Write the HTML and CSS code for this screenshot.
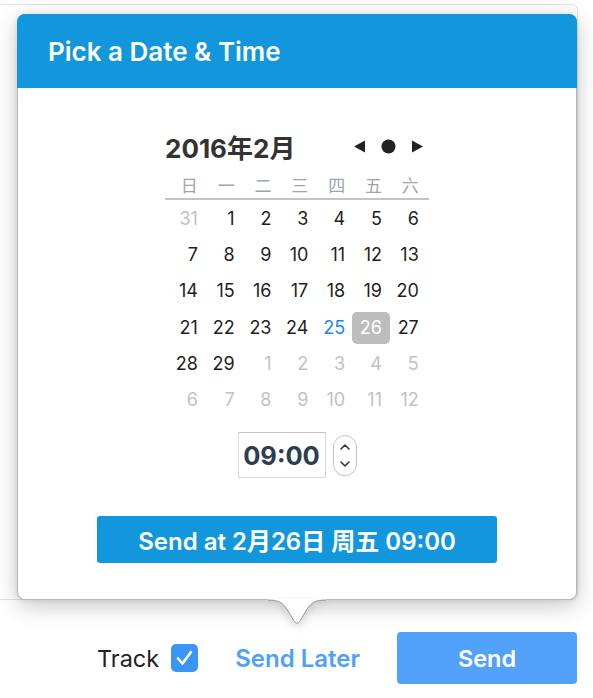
FILE: index.html
```html
<!DOCTYPE html>
<html>
<head>
<meta charset="utf-8">
<link rel="stylesheet" href="styles.css">
</head>
<body>
<div class="composer"></div>
<div class="footer">
  <span class="track">Track</span>
  <span class="checkbox"><svg width="27" height="28" viewBox="0 0 27 28"><path d="M7 14.5 L11.5 19.5 L20 8" fill="none" stroke="#fff" stroke-width="2.6" stroke-linecap="round" stroke-linejoin="round"/></svg></span>
  <span class="later">Send Later</span>
  <button class="send">Send</button>
</div>

<div class="popover">
  <div class="pop-head">Pick a Date &amp; Time</div>
  <div class="pop-body">
    <div class="cal">
      <div class="cal-title">
        <span class="month">2016年2月</span>
        <span class="nav">
          <svg width="12" height="13" viewBox="0 0 12 13"><path d="M0 6.5 L11 0.5 L11 12.5 Z" fill="#222"/></svg>
          <svg width="15" height="15" viewBox="0 0 15 15"><circle cx="7.5" cy="7.5" r="7" fill="#222"/></svg>
          <svg width="12" height="13" viewBox="0 0 12 13"><path d="M12 6.5 L1 0.5 L1 12.5 Z" fill="#222"/></svg>
        </span>
      </div>
      <div class="weekdays">
        <span>日</span><span>一</span><span>二</span><span>三</span><span>四</span><span>五</span><span>六</span>
      </div>
      <div class="days">
        <span class="d o"><i>31</i></span><span class="d"><i>1</i></span><span class="d"><i>2</i></span><span class="d"><i>3</i></span><span class="d"><i>4</i></span><span class="d"><i>5</i></span><span class="d"><i>6</i></span>
        <span class="d"><i>7</i></span><span class="d"><i>8</i></span><span class="d"><i>9</i></span><span class="d"><i>10</i></span><span class="d"><i>11</i></span><span class="d"><i>12</i></span><span class="d"><i>13</i></span>
        <span class="d"><i>14</i></span><span class="d"><i>15</i></span><span class="d"><i>16</i></span><span class="d"><i>17</i></span><span class="d"><i>18</i></span><span class="d"><i>19</i></span><span class="d"><i>20</i></span>
        <span class="d"><i>21</i></span><span class="d"><i>22</i></span><span class="d"><i>23</i></span><span class="d"><i>24</i></span><span class="d today"><i>25</i></span><span class="d sel"><i>26</i></span><span class="d"><i>27</i></span>
        <span class="d"><i>28</i></span><span class="d"><i>29</i></span><span class="d o"><i>1</i></span><span class="d o"><i>2</i></span><span class="d o"><i>3</i></span><span class="d o"><i>4</i></span><span class="d o"><i>5</i></span>
        <span class="d o"><i>6</i></span><span class="d o"><i>7</i></span><span class="d o"><i>8</i></span><span class="d o"><i>9</i></span><span class="d o"><i>10</i></span><span class="d o"><i>11</i></span><span class="d o"><i>12</i></span>
      </div>
    </div>
    <div class="time-row">
      <div class="time">09:00</div>
      <div class="stepper"><svg width="24" height="41" viewBox="0 0 24 41"><path d="M8 14 L12 10 L16 14" fill="none" stroke="#333" stroke-width="1.6" stroke-linecap="round" stroke-linejoin="round"/><path d="M8 27 L12 31 L16 27" fill="none" stroke="#333" stroke-width="1.6" stroke-linecap="round" stroke-linejoin="round"/></svg></div>
    </div>
    <button class="send-at">Send at 2月26日 周五 09:00</button>
  </div>
  <svg class="arrow" width="58" height="28" viewBox="0 0 58 28"><path d="M0 0 L0 1 C10 1 14 3 19 10 L26 22 Q29 26.5 32 22 L39 10 C44 3 48 1 58 1 L58 0 Z" fill="#fff"/><path d="M0 1 C10 1 14 3 19 10 L26 22 Q29 26.5 32 22 L39 10 C44 3 48 1 58 1" fill="none" stroke="rgba(0,0,0,0.35)" stroke-width="1"/></svg>
</div>
</body>
</html>
```

FILE: styles.css
```css
* { box-sizing: border-box; }
html, body { margin: 0; padding: 0; background: #fff; }
body {
  width: 593px;
  height: 698px;
  overflow: hidden;
  position: relative;
  font-family: Inter, "Noto Sans CJK SC", sans-serif;
  color: #222;
}
.composer {
  margin: 4px 0 0 -10px;
  width: 588px;
  height: 596px;
  border: 1px solid #e4e4e4;
  border-radius: 6px;
  background: #fff;
}
.footer {
  display: flex;
  align-items: center;
  justify-content: flex-end;
  margin-top: 32px;
  padding-right: 16px;
  height: 52px;
}
.track {
  font-size: 23.5px;
  color: #222;
  margin-right: 12px;
}
.checkbox {
  width: 27px;
  height: 28px;
  border-radius: 5px;
  background: #3a95f5;
  display: flex;
  margin-right: 37px;
}
.later {
  font-size: 24px;
  font-weight: 600;
  color: #4ea1f8;
  margin-right: 37px;
}
.send {
  width: 180px;
  height: 52px;
  border: none;
  border-radius: 4px;
  background: #52a2fb;
  color: #fff;
  font-family: inherit;
  font-size: 23.5px;
  font-weight: 600;
}
.popover {
  position: absolute;
  left: 17px;
  top: 14px;
  width: 560px;
  height: 586px;
  background: #fff;
  border: 1px solid rgba(0,0,0,0.28);
  border-radius: 8px;
  box-shadow: 0 6px 22px rgba(0,0,0,0.22), 0 0 6px rgba(0,0,0,0.08);
}
.pop-head {
  height: 74px;
  margin: -1px -1px 0 -1px;
  background: #1297dd;
  border-radius: 8px 8px 0 0;
  color: #fff;
  font-size: 26px;
  font-weight: 600;
  line-height: 76px;
  padding-left: 31px;
}
.pop-body {
  display: flex;
  flex-direction: column;
  align-items: center;
  padding-top: 43px;
}
.cal { width: 264px; }
.cal-title {
  display: flex;
  justify-content: space-between;
  align-items: center;
  height: 30px;
}
.month {
  font-size: 26px;
  font-weight: 700;
  color: #333;
}
.nav {
  display: flex;
  align-items: center;
  gap: 15px;
  padding-right: 6px;
}
.nav svg { display: block; }
.weekdays {
  display: grid;
  grid-template-columns: repeat(7, 36.83px);
  margin-top: 10px;
  height: 29px;
  border-bottom: 2px solid #c4c4c4;
  font-size: 17px;
  color: #9ca5ae;
  align-items: center;
}
.weekdays span { text-align: right; padding-right: 4px; }
.days {
  display: grid;
  grid-template-columns: repeat(7, 36.83px);
  grid-auto-rows: 36.2px;
  margin-top: 1px;
}
.d {
  display: flex;
  justify-content: flex-end;
  align-items: center;
  padding-right: 4px;
  font-size: 18px;
  color: #1e1e1e;
}
.d i {
  font-style: normal;
  padding: 4px 8px;
  margin-right: -8px;
  line-height: 24px;
  border-radius: 5px;
}
.d.o { color: #c2c2c2; }
.d.today { color: #1b86f5; }
.d.sel i {
  background: #bdbdbd;
  color: #fff;
}
.time-row {
  display: flex;
  align-items: center;
  gap: 7px;
  margin-top: 14px;
}
.time {
  width: 88px;
  height: 46px;
  border: 1px solid #dadada;
  border-top-color: #c4c4c4;
  font-size: 25.5px;
  font-weight: 700;
  color: #2e3e4e;
  display: flex;
  align-items: center;
  justify-content: center;
}
.stepper {
  width: 24px;
  height: 41px;
  border: 1px solid #c5c5c5;
  border-radius: 12px;
  box-shadow: 0 1px 1px rgba(0,0,0,0.08);
  display: flex;
  align-items: center;
  justify-content: center;
  overflow: hidden;
}
.stepper svg { display: block; flex: none; }
.send-at {
  margin-top: 38px;
  width: 400px;
  height: 47px;
  border: none;
  border-radius: 3px;
  background: #1297dd;
  color: #fff;
  font-family: inherit;
  font-size: 24px;
  font-weight: 600;
}
.arrow {
  position: absolute;
  left: 250px;
  top: 100%;
  display: block;
  filter: drop-shadow(0 4px 4px rgba(0,0,0,0.15));
}
```
